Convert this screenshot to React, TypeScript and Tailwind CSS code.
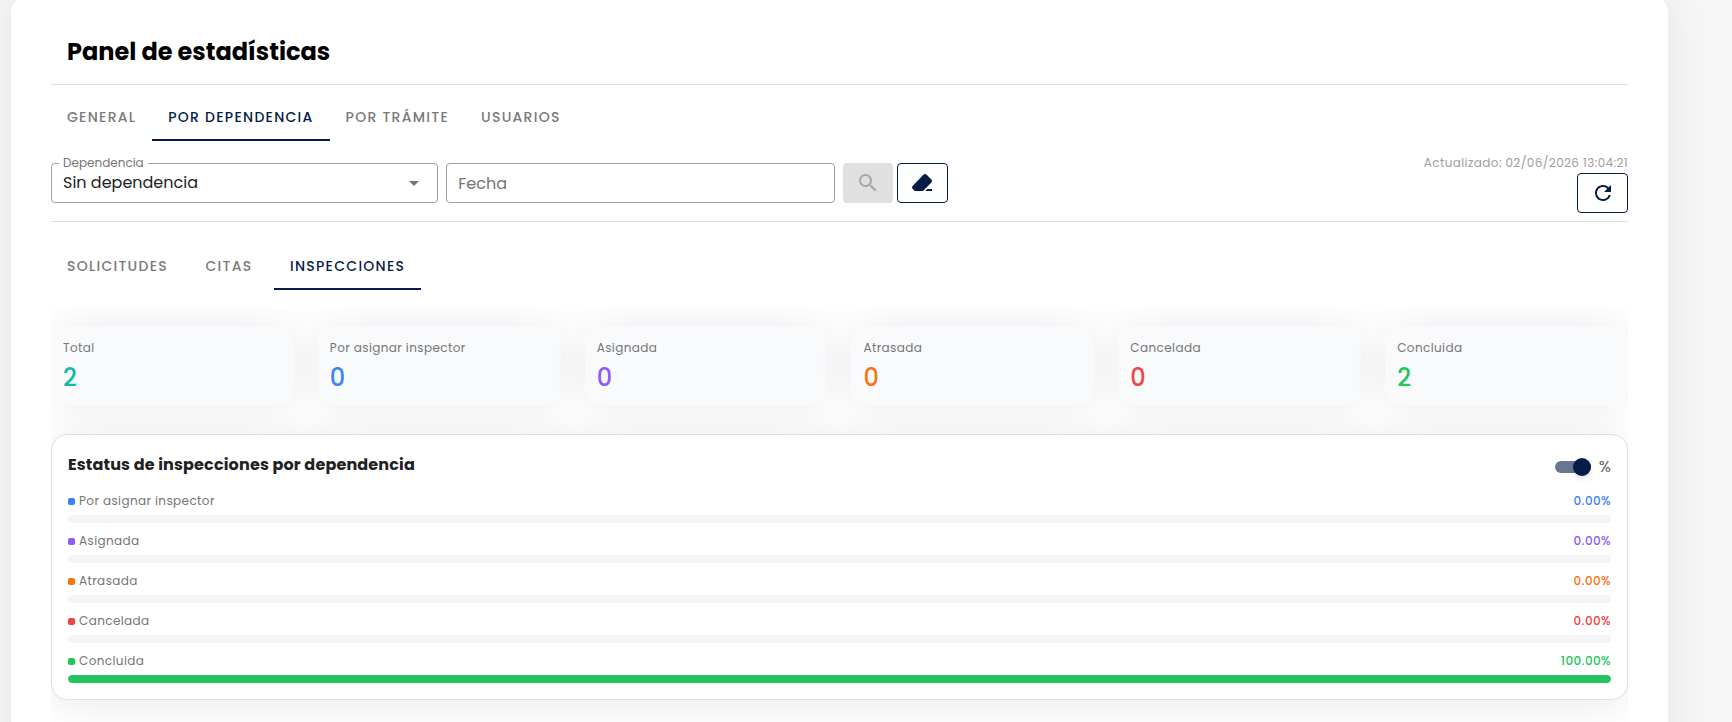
import { useState } from 'react'
import { MdArrowDropDown, MdRefresh, MdSearch } from 'react-icons/md'

const MAIN_TABS = ['General', 'Por dependencia', 'Por trámite', 'Usuarios']
const SUB_TABS = ['Solicitudes', 'Citas', 'Inspecciones']

interface Status {
  label: string
  value: number
  text: string
  fill: string
}

const STATUSES: Status[] = [
  { label: 'Por asignar inspector', value: 0, text: 'text-[#3b82f6]', fill: 'bg-[#3b82f6]' },
  { label: 'Asignada', value: 0, text: 'text-[#8b5cf6]', fill: 'bg-[#8b5cf6]' },
  { label: 'Atrasada', value: 0, text: 'text-[#f97316]', fill: 'bg-[#f97316]' },
  { label: 'Cancelada', value: 0, text: 'text-[#ef4444]', fill: 'bg-[#ef4444]' },
  { label: 'Concluida', value: 2, text: 'text-[#22c55e]', fill: 'bg-[#22c55e]' },
]

const TOTAL = STATUSES.reduce((sum, s) => sum + s.value, 0)

function Tabs({ items, active, onSelect }: { items: string[]; active: string; onSelect: (tab: string) => void }) {
  return (
    <div role="tablist" className="flex">
      {items.map(item => (
        <button
          key={item}
          type="button"
          role="tab"
          aria-selected={item === active}
          onClick={() => onSelect(item)}
          className={`h-12 min-w-[90px] px-4 border-y-2 border-t-transparent text-sm font-medium uppercase tracking-[0.09em] ${
            item === active ? 'border-b-[#051c48] text-[#051c48]' : 'border-b-transparent text-[#7a7a7a]'
          }`}
        >
          {item}
        </button>
      ))}
    </div>
  )
}

function EraserIcon() {
  return (
    <svg viewBox="0 -960 960 960" className="size-6" fill="currentColor" aria-hidden="true">
      <path d="M690-240h190v80H610l80-80Zm-500 80-85-85q-23-23-23.5-57t22.5-58l440-456q23-24 56.5-24t56.5 23l199 199q23 23 23 57t-23 57L520-160H190Z" />
    </svg>
  )
}

function StatCard({ label, value, text }: { label: string; value: number; text: string }) {
  return (
    <div className="h-20 rounded-2xl bg-[#f9fafc] px-3 pt-3 shadow-[0_0_40px_rgba(20,20,60,0.08)]">
      <p className="text-xs leading-5 tracking-[0.033em] text-[#757575]">{label}</p>
      <p className={`mt-1 text-2xl leading-8 font-medium ${text}`}>{value}</p>
    </div>
  )
}

function StatusRow({ status, percent }: { status: Status; percent: boolean }) {
  const share = TOTAL ? (status.value / TOTAL) * 100 : 0

  return (
    <div className="flex h-8 flex-col justify-between">
      <div className="flex h-5 items-center justify-between text-xs tracking-[0.033em]">
        <span className="flex items-center gap-1 text-[#757575]">
          <span className={`size-[7px] rounded-xs ${status.fill}`} />
          {status.label}
        </span>
        <span className={`font-medium ${status.text}`}>{percent ? `${share.toFixed(2)}%` : status.value}</span>
      </div>
      <div className="h-2 overflow-hidden rounded-full bg-[#f4f4f4]">
        <div className={`h-full rounded-full ${status.fill}`} style={{ width: `${share}%` }} />
      </div>
    </div>
  )
}

export default function App() {
  const [mainTab, setMainTab] = useState('Por dependencia')
  const [subTab, setSubTab] = useState('Inspecciones')
  const [percent, setPercent] = useState(true)

  return (
    <div className="min-h-screen overflow-hidden bg-[#f6f6f6] pr-16 pl-[11px] font-['Poppins','Inter',sans-serif] text-[#212121]">
      <main className="-mt-1 min-h-screen rounded-2xl bg-white px-10 pt-8 pb-10 shadow-[0_0_40px_rgba(20,20,100,0.08)]">
        <h1 className="h-[57px] border-b border-[#e0e0e0] px-4 pt-1 text-2xl leading-10 font-bold text-black">
          Panel de estadísticas
        </h1>

        <div className="pt-2">
          <Tabs items={MAIN_TABS} active={mainTab} onSelect={setMainTab} />
        </div>

        <section className="flex items-start gap-2 border-b border-[#e0e0e0] pt-3 pb-2">
          <div className="relative mt-[10px] w-[calc(25%-7px)]">
            <label htmlFor="dependencia" className="absolute -top-2 left-2 bg-white px-1 text-xs leading-4 text-[#757575]">
              Dependencia
            </label>
            <select
              id="dependencia"
              className="h-10 w-full appearance-none rounded-sm border border-[#9e9e9e] bg-white px-[11px] text-base outline-none"
            >
              <option>Sin dependencia</option>
            </select>
            <MdArrowDropDown className="pointer-events-none absolute top-2 right-3 size-6 text-[#757575]" />
          </div>
          <input
            aria-label="Fecha"
            placeholder="Fecha"
            className="mt-[10px] h-10 w-[calc(25%-6px)] rounded-sm border border-[#9e9e9e] px-[11px] text-base outline-none placeholder:text-[#757575]"
          />
          <div className="mt-[10px] flex gap-1">
            <button
              type="button"
              disabled
              aria-label="Buscar"
              className="flex h-10 w-[50px] items-center justify-center rounded-sm bg-[#e0e0e0] text-[#a6a6a6]"
            >
              <MdSearch className="size-6" />
            </button>
            <button
              type="button"
              aria-label="Limpiar"
              className="flex h-10 w-[51px] items-center justify-center rounded-sm border border-[#051c48] text-[#051c48]"
            >
              <EraserIcon />
            </button>
          </div>
          <div className="ml-auto flex flex-col items-end">
            <span className="text-xs leading-5 tracking-[0.033em] text-[#9e9e9e]">Actualizado: 02/06/2026 13:04:21</span>
            <button
              type="button"
              aria-label="Actualizar"
              className="flex h-10 w-[51px] items-center justify-center rounded-sm border border-[#051c48] text-[#051c48]"
            >
              <MdRefresh className="size-6" />
            </button>
          </div>
        </section>

        <div className="pt-5">
          <Tabs items={SUB_TABS} active={subTab} onSelect={setSubTab} />
        </div>

        <div className="mt-4 overflow-hidden pt-5 pb-7">
          <div className="grid grid-cols-6 gap-6">
            <StatCard label="Total" value={TOTAL} text="text-[#14b8a6]" />
            {STATUSES.map(s => (
              <StatCard key={s.label} label={s.label} value={s.value} text={s.text} />
            ))}
          </div>

          <section className="mt-7 rounded-2xl border border-[#e0e0e0] bg-white p-4 shadow-[0_4px_40px_rgba(20,20,60,0.09)]">
            <div className="flex h-7 items-center justify-between">
              <h2 className="text-base font-bold tracking-[0.009em]">Estatus de inspecciones por dependencia</h2>
              <label className="flex items-center gap-2 pt-1 text-base text-[#616161]">
                <input
                  type="checkbox"
                  role="switch"
                  checked={percent}
                  onChange={e => setPercent(e.target.checked)}
                  className="peer sr-only"
                />
                <span className="flex h-3 w-9 items-center rounded-full bg-[#bdbdbd] peer-checked:justify-end peer-checked:bg-[#69768f]">
                  <span className="size-[18px] rounded-full bg-[#051c48] shadow-md" />
                </span>
                %
              </label>
            </div>
            <div className="mt-3 flex flex-col gap-2">
              {STATUSES.map(s => (
                <StatusRow key={s.label} status={s} percent={percent} />
              ))}
            </div>
          </section>
        </div>
      </main>
    </div>
  )
}
